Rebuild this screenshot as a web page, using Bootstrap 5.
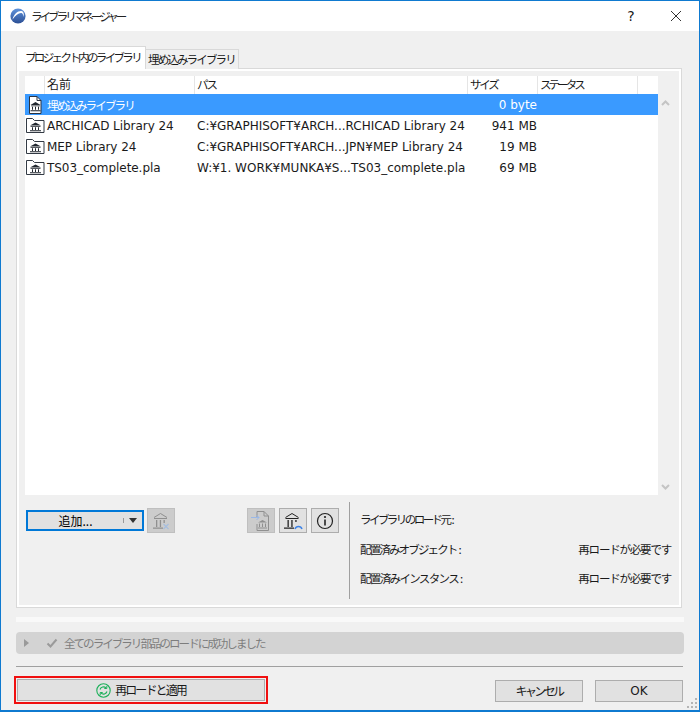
<!DOCTYPE html>
<html lang="ja">
<head>
<meta charset="utf-8">
<title>ライブラリマネージャー</title>
<link href="https://cdn.jsdelivr.net/npm/bootstrap@5.3.0/dist/css/bootstrap.min.css" rel="stylesheet">
<style>
html,body{margin:0;background:#f0f0f0;}
body{font-family:"DejaVu Sans","Noto Sans CJK JP",sans-serif;font-size:12px;line-height:16px;color:#1a1a1a;}
.jp{font-family:"Noto Sans CJK JP",sans-serif;font-size:11.5px;}
.lt-title{letter-spacing:-2.95px;}
.lt-tab{letter-spacing:-2.65px;}
.lt-emb{letter-spacing:-1.85px;}
.lt-path{letter-spacing:-2.05px;}
.lt-size{letter-spacing:-2.2px;}
.lt-stat{letter-spacing:-2.77px;}
.lt-load{letter-spacing:-2.55px;}
.lt-obj{letter-spacing:-1.85px;}
.lt-inst{letter-spacing:-1.65px;}
.lt-need{letter-spacing:-1.2px;}
.lt-ok{letter-spacing:-1.95px;}
.lt-apply{letter-spacing:-1.9px;}
.lt-cancel{letter-spacing:-2.6px;}
.colon{margin-left:2px;letter-spacing:0;}
.win{width:700px;height:712px;border:1px solid #0f7ad0;border-bottom-width:2px;background:#f0f0f0;overflow:hidden;position:relative;}
.ttl{height:30px;background:#fff;padding-left:9px;}
.ttl-text{margin-left:5px;color:#222;}
.ttl-q{width:20px;margin-right:29px;font-size:14px;text-align:center;}
.ttl-x{margin-right:17px;}
.body-area{padding:15px 15px 0;}
.tab-row{height:23px;position:relative;z-index:1;}
.tab-on{width:130px;height:23px;background:#fff;border:1px solid #d9d9d9;border-bottom:0;padding:2px 0 0 8px;white-space:nowrap;}
.tab-off{width:93px;height:20px;margin-top:3px;background:#f0f0f0;border:1px solid #d9d9d9;border-bottom:0;border-left:0;padding:1px 0 0 2px;white-space:nowrap;}
.pane{width:666px;height:540px;margin-top:-1px;border:1px solid #d9d9d9;box-shadow:inset 0 0 0 2px #fff;padding:7px 8px 0;}
.lst{height:419px;}
.lst-main{width:634px;background:#fff;}
.scr{width:15px;padding:24px 0 5px;}
.hdr{height:18px;background:#fff;}
.hc{border-right:1px solid #e5e5e5;padding-left:2px;height:18px;white-space:nowrap;}
.hc-big{font-size:12px;}
.c0{width:20px;}.c1{width:150px;}.c2{width:273px;}.c3{width:70px;}.c4{width:100px;}
.rw{height:21px;white-space:nowrap;}
.rw-sel{background:#3a9aff;color:#fff;}
.cell-ic{width:22px;padding-left:1px;}
.cell-n{width:150px;letter-spacing:-.05px;}
.cell-n.jp{letter-spacing:-1.85px;}
.cell-p{width:273px;padding-left:0;overflow:hidden;}
.cell-s{width:70px;text-align:right;padding-right:3px;}
.ctl{height:102px;margin-top:7px;}
.ctl-l{width:323px;flex:none;padding:6px 0 0 1px;}
.add{width:118px;height:21px;margin-top:2px;border:2px solid #0078d7;background:#e1e1e1;}
.add-t{width:95px;text-align:center;color:#000;font-size:12px;}
.add-c{width:19px;border-left:1px solid #999;margin:1px 0;}
.tri{width:0;height:0;border:4px solid transparent;border-top:5px solid #333;border-bottom:0;}
.ib{width:28px;height:25px;border:1px solid #adadad;background:#e1e1e1;padding:0;}
.ib-dis{background:#ccc;border-color:#bfbfbf;}
.sp1{margin-left:3px;}.sp2{margin-left:72px;}.sp3{margin-left:4px;}
.inf{width:322px;flex:none;margin-left:1px;border-left:1px solid #a0a0a0;padding:0 0 4px 10px;height:97px;}
.inf-r{height:29.5px;}
.inf-r span{white-space:nowrap;}
.strip{height:5px;width:668px;background:#f9f9f9;margin-top:9px;}
.stat{height:22px;width:668px;background:#d3d3d3;border-radius:4px;margin-top:10px;color:#7d7d7d;padding-left:8px;}
.s-tri{width:0;height:0;border:4px solid transparent;border-left:5px solid #9a9a9a;border-right:0;margin-right:17px;}
.s-chk{margin-right:6px;}
.rule{height:1px;width:667px;background:#a0a0a0;margin-top:12px;}
.foot{margin-top:9px;height:28px;}
.redbox{width:254px;height:28px;border:2px solid #f01010;padding:1px;margin-left:-2px;}
.wbtn{background:#e1e1e1;border:1px solid #adadad;color:#1a1a1a;font-size:12px;line-height:16px;padding:0;height:22px;border-radius:0;}
.wbtn:hover{background:#e1e1e1;color:#1a1a1a;border-color:#adadad;}
.w-apply{width:248px;height:22px;}
.w-cancel{width:88px;margin-left:auto;}
.w-ok{width:88px;margin-left:12px;margin-right:1px;}
.grip{position:absolute;right:1px;bottom:1px;}
</style>
</head>
<body>
<div class="win">
  <div class="ttl d-flex align-items-center">
    <svg width="16" height="16" viewBox="0 0 16 16"><defs><linearGradient id="lg" x1="0" y1="0" x2="0" y2="1"><stop offset="0" stop-color="#5f93dc"/><stop offset="1" stop-color="#2c4f94"/></linearGradient></defs><circle cx="8" cy="8" r="7.6" fill="url(#lg)"/><path d="M2.500 11.500C4 6 8 2.500 12 3.200c1.600.4 2 2.400 1.800 5.800-.6-2.400-1.200-3.800-2.600-4C8.600 4.800 5.500 7.500 2.500 11.500z" fill="#fff"/></svg>
    <span class="ttl-text jp lt-title">ライブラリマネージャー</span>
    <span class="ttl-q ms-auto">?</span>
    <svg class="ttl-x" width="12" height="12" viewBox="0 0 12 12"><path d="M1 1l10 10M11 1L1 11" stroke="#333" stroke-width="1" fill="none"/></svg>
  </div>
  <div class="body-area">
    <div class="tab-row d-flex">
      <div class="tab-on jp lt-tab">プロジェクト内のライブラリ</div>
      <div class="tab-off jp lt-emb">埋め込みライブラリ</div>
    </div>
    <div class="pane">
      <div class="lst d-flex">
        <div class="lst-main">
          <div class="hdr d-flex jp">
            <div class="hc c0"></div><div class="hc c1 hc-big">名前</div><div class="hc c2 lt-path">パス</div><div class="hc c3 lt-size">サイズ</div><div class="hc c4 lt-title">ステータス</div>
          </div>
          <div class="rw rw-sel d-flex align-items-center">
            <div class="cell-ic d-flex">
              <svg width="18" height="18" viewBox="0 0 18 18"><path d="M3.500 .5h7.500l4 4v13h-11.500z" fill="#fff" stroke="#2b3340"/><path d="M11 .5v4h4" fill="none" stroke="#2b3340"/><path d="M4.500 9l5-3 5 3zM5 9.500h9v.8H5zM6 10.800h1v3H6zM9 10.800h1v3H9zM12 10.800h1v3h-1zM4.500 14.200h10v1.100h-10z" fill="#20262e"/></svg>
            </div>
            <div class="cell-n jp">埋め込みライブラリ</div><div class="cell-p"></div><div class="cell-s">0 byte</div>
          </div>
          <div class="rw d-flex align-items-center">
            <div class="cell-ic d-flex"><svg width="19" height="17" viewBox="0 0 19 17"><path d="M.500 15.500v-14h6l2 2h9.500v12z" fill="#fff" stroke="#333a44"/><path d="M4 8.500l5.500-3 5.500 3zM4.500 9h10v.8h-10zM6 10.300h1v2.700H6zM9 10.300h1v2.700H9zM12 10.300h1v2.700h-1zM4 13.200h11v1H4z" fill="#20262e"/></svg></div>
            <div class="cell-n">ARCHICAD Library 24</div><div class="cell-p">C:¥GRAPHISOFT¥ARCH...RCHICAD Library 24</div><div class="cell-s">941 MB</div>
          </div>
          <div class="rw d-flex align-items-center">
            <div class="cell-ic d-flex"><svg width="19" height="17" viewBox="0 0 19 17"><path d="M.500 15.500v-14h6l2 2h9.500v12z" fill="#fff" stroke="#333a44"/><path d="M4 8.500l5.500-3 5.500 3zM4.500 9h10v.8h-10zM6 10.300h1v2.700H6zM9 10.300h1v2.700H9zM12 10.300h1v2.700h-1zM4 13.200h11v1H4z" fill="#20262e"/></svg></div>
            <div class="cell-n">MEP Library 24</div><div class="cell-p">C:¥GRAPHISOFT¥ARCH...JPN¥MEP Library 24</div><div class="cell-s">19 MB</div>
          </div>
          <div class="rw d-flex align-items-center">
            <div class="cell-ic d-flex"><svg width="19" height="17" viewBox="0 0 19 17"><path d="M.500 15.500v-14h6l2 2h9.500v12z" fill="#fff" stroke="#333a44"/><path d="M4 8.500l5.500-3 5.500 3zM4.500 9h10v.8H4.500zM6 10.300h1v2.700H6zM9 10.300h1v2.700H9zM12 10.300h1v2.700h-1zM4 13.200h11v1H4z" fill="#20262e"/></svg></div>
            <div class="cell-n">TS03_complete.pla</div><div class="cell-p">W:¥1. WORK¥MUNKA¥S...TS03_complete.pla</div><div class="cell-s">69 MB</div>
          </div>
        </div>
        <div class="scr d-flex flex-column justify-content-between align-items-center">
          <svg width="9" height="6" viewBox="0 0 9 6"><path d="M1 5l3.500-3.500L8 5" fill="none" stroke="#c4c4c4" stroke-width="2"/></svg>
          <svg width="9" height="6" viewBox="0 0 9 6"><path d="M1 1l3.500 3.500L8 1" fill="none" stroke="#c4c4c4" stroke-width="2"/></svg>
        </div>
      </div>
      <div class="ctl d-flex">
        <div class="ctl-l d-flex align-items-start">
          <div class="add d-flex align-items-center">
            <div class="add-t jp">追加...</div>
            <div class="add-c d-flex align-items-center justify-content-center"><div class="tri"></div></div>
          </div>
          <button class="ib ib-dis sp1 d-flex align-items-center justify-content-center" aria-label="削除"><svg width="20" height="20" viewBox="0 0 20 20"><path d="M3 6.500l6.500-4 6.500 4" fill="none" stroke="#8f8f8f"/><path d="M3 7h13v1H3zM5 9h1.300v7H5zM8.800 9h1.300v7H8.800zM12.500 9h1.300v3h-1.300zM2 16.500h10v1.200H2z" fill="#8f8f8f"/><path d="M12.500 13l5 5M17.500 13l-5 5" stroke="#a6bede" stroke-width="1.200"/></svg></button>
          <button class="ib ib-dis sp2 d-flex align-items-center justify-content-center" aria-label="読み込み"><svg width="22" height="22" viewBox="0 0 22 22"><path d="M7 7V1.500h7l4.500 4.500v14.500H7V14" fill="none" stroke="#909090"/><path d="M14 1.500V6h4.500" fill="none" stroke="#909090"/><path d="M8 12.500l4.500-2.500 4.500 2.500zM9 13.500h1v3.500H9zM12 13.500h1v3.500h-1zM15 13.500h1v3.500h-1zM8 17.500h9v1H8z" fill="#8f8f8f"/><path d="M1 7.500h8M6.500 5L9 7.500 6.500 10" stroke="#9ab8e8" fill="none"/></svg></button>
          <button class="ib sp3 d-flex align-items-center justify-content-center" aria-label="更新"><svg width="22" height="20" viewBox="0 0 22 20"><path d="M3.500 6.500l6.500-4 6.500 4" fill="none" stroke="#222"/><path d="M3.500 7h13v1h-13zM5.500 9h1.300v7H5.500zM9.300 9h1.300v7H9.300zM13.300 9h1.300v2h-1.300zM2 16.500h10v1.200H2z" fill="#222"/><path d="M13 18a3.700 3.700 0 0 1 7 0" fill="none" stroke="#3c82e6" stroke-width="1.500"/></svg></button>
          <button class="ib sp3 d-flex align-items-center justify-content-center" aria-label="情報"><svg width="18" height="18" viewBox="0 0 18 18"><circle cx="9" cy="9" r="7.500" fill="none" stroke="#222" stroke-width="1.200"/><path d="M9 7.500v6" stroke="#222" stroke-width="1.600"/><circle cx="9" cy="5" r="1.100" fill="#222"/></svg></button>
        </div>
        <div class="inf jp d-flex flex-column justify-content-center">
          <div class="inf-r d-flex align-items-center"><span class="lt-load">ライブラリのロード元<span class="colon">:</span></span></div>
          <div class="inf-r d-flex align-items-center justify-content-between"><span class="lt-obj">配置済みオブジェクト<span class="colon">:</span></span><span class="lt-need">再ロードが必要です</span></div>
          <div class="inf-r d-flex align-items-center justify-content-between"><span class="lt-inst">配置済みインスタンス<span class="colon">:</span></span><span class="lt-need">再ロードが必要です</span></div>
        </div>
      </div>
    </div>
    <div class="strip"></div>
    <div class="stat d-flex align-items-center jp">
      <div class="s-tri"></div>
      <svg class="s-chk" width="12" height="10" viewBox="0 0 12 10"><path d="M1.500 5.500l3 3 6-7" fill="none" stroke="#9a9a9a" stroke-width="2"/></svg>
      <span class="lt-ok">全てのライブラリ部品のロードに成功しました</span>
    </div>
    <div class="rule"></div>
    <div class="foot d-flex">
      <div class="redbox">
        <button class="btn wbtn w-apply d-flex align-items-center justify-content-center jp">
          <svg class="me-1" width="15" height="15" viewBox="0 0 15 15"><circle cx="7.500" cy="7.500" r="6.700" fill="none" stroke="#1cb05a" stroke-width="1.100"/><path d="M4 6.500a3.700 3.700 0 0 1 6-1.700M11 8.500a3.700 3.700 0 0 1-6 1.700" fill="none" stroke="#1cb05a" stroke-width="1.100"/><path d="M10.800 3v2.500H8.300M4.200 12V9.500h2.500" fill="none" stroke="#1cb05a"/></svg>
          <span class="lt-apply">再ロードと適用</span>
        </button>
      </div>
      <button class="btn wbtn w-cancel mt-1 jp"><span class="lt-cancel">キャンセル</span></button>
      <button class="btn wbtn w-ok mt-1">OK</button>
    </div>
  </div>
  <svg class="grip" width="12" height="12" viewBox="0 0 12 12"><path d="M9 1h2v2H9zM5 5h2v2H5zM9 5h2v2H9zM1 9h2v2H1zM5 9h2v2H5zM9 9h2v2H9z" fill="#b5b5b5"/></svg>
</div>
<script src="https://cdn.jsdelivr.net/npm/bootstrap@5.3.0/dist/js/bootstrap.bundle.min.js"></script>
</body>
</html>
